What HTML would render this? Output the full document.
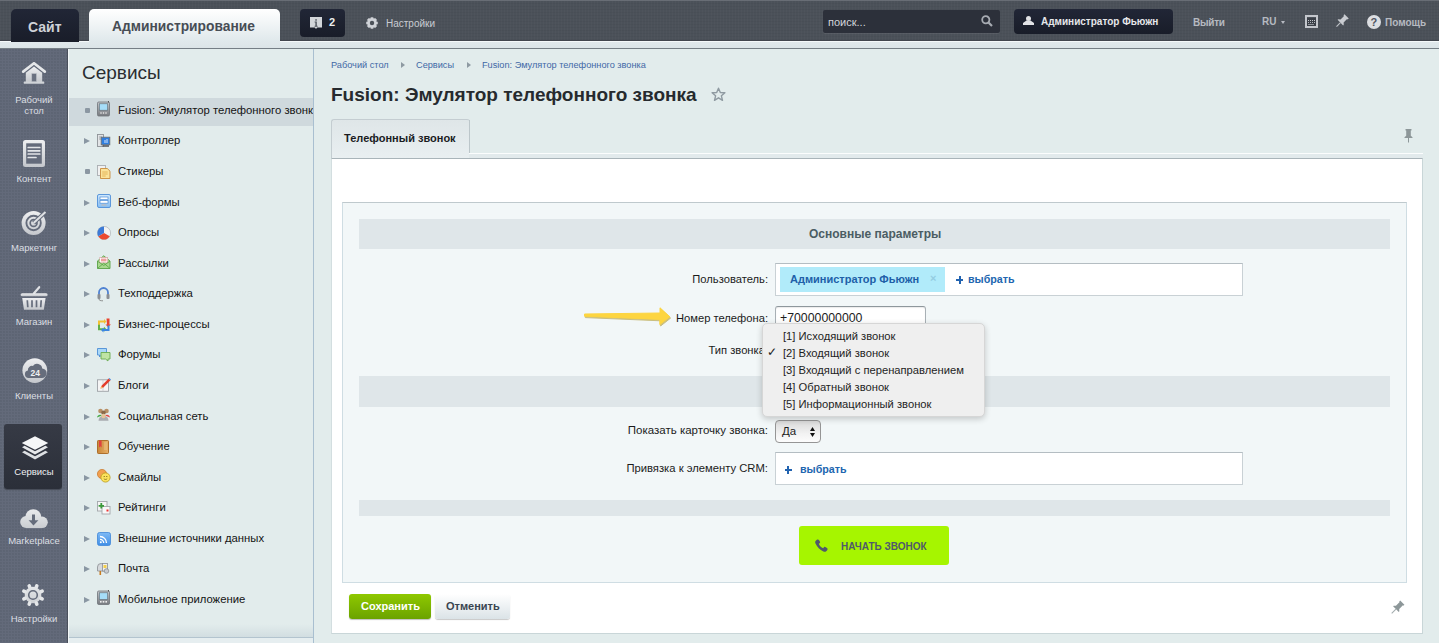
<!DOCTYPE html>
<html><head><meta charset="utf-8">
<style>
*{box-sizing:border-box;margin:0;padding:0}
html,body{width:1439px;height:643px;overflow:hidden}
body{font-family:"Liberation Sans",sans-serif;background:#e2ecec;position:relative;color:#000}
.a{position:absolute}
.nw{white-space:nowrap}
/* top bar */
#top{left:0;top:0;width:1439px;height:41px;background-color:#4b5159;background-image:repeating-linear-gradient(90deg,rgba(255,255,255,.02) 0 1px,transparent 1px 3px),repeating-linear-gradient(0deg,rgba(0,0,0,.035) 0 1px,transparent 1px 3px);border-top:1px solid #686d75;border-bottom:1px solid #42464e}
#strip{left:0;top:41px;width:1439px;height:8px;background:linear-gradient(#f4f8f9 0,#f4f8f9 1px,#e0e8eb 1px,#dbe4e7);border-bottom:1px solid #757e85}
.btn-dark{background:linear-gradient(#212636,#191d29);border-radius:4px}
/* sidebar */
#side{left:0;top:49px;width:68px;height:594px;background-color:#636a7a;background-image:radial-gradient(circle at 1px 1px,rgba(45,50,62,.2) 0.5px,transparent 0.9px);background-size:3px 3px;border-right:1px solid #4a505c}
.sl{color:#dcdfe3;font-size:9.5px;text-align:center;width:68px;left:0;line-height:11px}
/* menu */
#menu{left:68px;top:49px;width:246px;height:594px;background:#e2ecec;border-right:1px solid #a9bfd0;border-left:1px solid #f3f7f8}
.mi{left:-1px;width:246px;height:28px;font-size:11.3px;color:#141414}
.mi .t{position:absolute;left:50px;top:6px;white-space:nowrap}
.mi .ar{position:absolute;left:16px;top:9.8px;width:0;height:0;border-left:6px solid #8a97a3;border-top:3.5px solid transparent;border-bottom:3.5px solid transparent}
.mi .dot{position:absolute;left:17px;top:10px;width:5px;height:5px;background:#8b97a2;border-radius:1px}
.mi svg{position:absolute;left:29px;top:3px}
.mi.hl{background:#cfd9dd}
.mi i{display:block}
.bc{font-size:9.2px;color:#3f68a6}
.bca{width:0;height:0;border-left:4px solid #8e9aa2;border-top:3.5px solid transparent;border-bottom:3.5px solid transparent}
.band{left:359px;width:1031px;background:#dfe6e9}
.lbl{font-size:11.2px;color:#1b1b1b;text-align:right}
.dd{left:783px;font-size:11.2px;color:#1e1e1e}
</style></head><body>

<div id="top" class="a"></div>
<div id="strip" class="a"></div>

<!-- Site button -->
<div class="a btn-dark" style="left:11px;top:9px;width:68px;height:33px;border-radius:5px 5px 0 0"></div>
<div class="a nw" style="left:28px;top:18.5px;font-size:14px;font-weight:700;color:#cfd2d8">Сайт</div>
<!-- Admin tab -->
<div class="a" style="left:89px;top:9px;width:191px;height:33px;background:linear-gradient(#ffffff,#dfe8eb);border-radius:5px 5px 0 0"></div>
<div class="a nw" style="left:112px;top:19px;font-size:13.8px;font-weight:700;color:#474d55">Администрирование</div>
<!-- notifications -->
<div class="a btn-dark" style="left:300px;top:9px;width:45px;height:28px"></div>
<svg class="a" style="left:310px;top:17px" width="13" height="13" viewBox="0 0 13 13"><path d="M0 0h12v10.6H7.2L6 12 4.8 10.6H0z" fill="#d3d6da"/><rect x="5.3" y="2.2" width="1.5" height="1.5" fill="#4d525b"/><path d="M4.6 4.6h2.2v4.2h.8v.9H4.6v-.9h.8V5.5h-.8z" fill="#4d525b"/></svg>
<div class="a nw" style="left:329px;top:16px;font-size:11px;font-weight:700;color:#eceef0">2</div>
<!-- settings -->
<svg class="a" style="left:365.5px;top:17px" width="12" height="12" viewBox="0 0 12 12"><g fill="#d0d3d8"><circle cx="6" cy="6" r="4.6"/><rect x="4.4" y="0.2" width="3.2" height="3" rx="1" transform="rotate(0 6 6)"/><rect x="4.4" y="0.2" width="3.2" height="3" rx="1" transform="rotate(45 6 6)"/><rect x="4.4" y="0.2" width="3.2" height="3" rx="1" transform="rotate(90 6 6)"/><rect x="4.4" y="0.2" width="3.2" height="3" rx="1" transform="rotate(135 6 6)"/><rect x="4.4" y="0.2" width="3.2" height="3" rx="1" transform="rotate(180 6 6)"/><rect x="4.4" y="0.2" width="3.2" height="3" rx="1" transform="rotate(225 6 6)"/><rect x="4.4" y="0.2" width="3.2" height="3" rx="1" transform="rotate(270 6 6)"/><rect x="4.4" y="0.2" width="3.2" height="3" rx="1" transform="rotate(315 6 6)"/></g><circle cx="6" cy="6" r="2.2" fill="#4b5159"/></svg>
<div class="a nw" style="left:386px;top:17.5px;font-size:10px;color:#c9ccd2">Настройки</div>

<!-- search -->
<div class="a" style="left:823px;top:10px;width:177px;height:23px;background:#2c303a;border-radius:2px;box-shadow:0 1px 0 rgba(255,255,255,.08)"></div>
<div class="a nw" style="left:828px;top:16px;font-size:11px;color:#d3d5da">поиск...</div>
<svg class="a" style="left:981px;top:15px" width="12" height="12" viewBox="0 0 12 12"><circle cx="4.8" cy="4.8" r="3.6" fill="none" stroke="#a7abb2" stroke-width="1.8"/><path d="M7.5 7.5L11 11" stroke="#a7abb2" stroke-width="2.2"/></svg>
<!-- user -->
<div class="a btn-dark" style="left:1014px;top:9px;width:159px;height:25px"></div>
<svg class="a" style="left:1023px;top:16px" width="11" height="9" viewBox="0 0 11 9"><circle cx="5.5" cy="2.5" r="2.5" fill="#e2e3e6"/><path d="M3.5 4.5h4l3.5 2.5v2H0V7z" fill="#e2e3e6"/></svg>
<div class="a nw" style="left:1041px;top:16px;font-size:10px;font-weight:700;color:#e6e7ea">Администратор Фьюжн</div>
<div class="a nw" style="left:1193px;top:16.5px;font-size:10px;letter-spacing:-.25px;font-weight:700;color:#b6bac1">Выйти</div>
<div class="a nw" style="left:1262px;top:16px;font-size:10px;font-weight:700;color:#b6bac1">RU</div>
<div class="a" style="left:1281px;top:21px;width:0;height:0;border-top:3px solid #b6bac1;border-left:2.5px solid transparent;border-right:2.5px solid transparent"></div>
<!-- keyboard icon -->
<div class="a" style="left:1305px;top:15px;width:13px;height:13px;border:2px solid #c3c6cc"></div>
<div class="a" style="left:1307px;top:17.5px;width:9px;height:8.5px;background:#3a3f47"></div><div class="a" style="left:1308px;top:19.5px;width:7px;height:1px;border-top:1px dotted #c3c6cc"></div><div class="a" style="left:1308px;top:22px;width:7px;height:1px;border-top:1px dotted #b0b4ba"></div><div class="a" style="left:1308px;top:24px;width:6px;height:1px;background:#8e9399"></div>
<!-- pin -->
<svg class="a" style="left:1334px;top:14px" width="15" height="15" viewBox="0 0 16 16"><g transform="rotate(45 8 8)"><path d="M4.8 0.3h6.4v1.6h-.9v5.2L12.2 8.8v.9H3.8v-.9L5.7 7.1V1.9h-.9z" fill="#c9ccd1"/><rect x="7.4" y="9.6" width="1.2" height="6" fill="#bfc3c8"/></g></svg>
<!-- help -->
<div class="a" style="left:1367px;top:15px;width:14px;height:14px;border-radius:50%;background:#dcdee2"></div>
<div class="a nw" style="left:1370.5px;top:15.5px;font-size:11px;font-weight:700;color:#4e545f">?</div>
<div class="a nw" style="left:1385px;top:17px;font-size:10px;font-weight:700;color:#b6bac1">Помощь</div>

<!-- left sidebar -->
<div id="side" class="a">
<!-- house -->
<svg class="a" style="left:21px;top:13px" width="26" height="23" viewBox="0 0 26 23"><defs><linearGradient id="ig" x1="0" y1="0" x2="0" y2="1"><stop offset="0" stop-color="#eeeff1"/><stop offset="1" stop-color="#c4c7cc"/></linearGradient></defs><path d="M2.2 9.6L13 1.2 23.8 9.6" fill="none" stroke="#e6e8ea" stroke-width="2.6" stroke-linecap="round" stroke-linejoin="round"/><path d="M4.8 10.8L13 4.6l8.2 6.2V20.5H4.8z" fill="url(#ig)"/><rect x="2.8" y="19.6" width="20.4" height="2.2" rx=".6" fill="#d0d3d7"/><rect x="10.8" y="11.6" width="4.6" height="8" fill="#6a7180" stroke="#b9bdc3" stroke-width=".5"/></svg>
<div class="a sl" style="top:45px">Рабочий<br>стол</div>
<!-- doc -->
<svg class="a" style="left:23px;top:91px" width="22" height="27" viewBox="0 0 22 27"><rect x="0" y="0" width="22" height="27" rx="2.5" fill="url(#ig)"/><rect x="3.2" y="3.3" width="15.6" height="20.4" fill="#646b7b"/><path d="M5.2 7.5h11.6M5.2 10.8h11.6M5.2 14h11.6M5.2 17.5h7.8" stroke="#e2e4e7" stroke-width="1.7" stroke-linecap="round"/></svg>
<div class="a sl" style="top:124px">Контент</div>
<!-- target -->
<svg class="a" style="left:21px;top:161px" width="27" height="25" viewBox="0 0 27 25"><circle cx="12.6" cy="13" r="12" fill="url(#ig)"/><circle cx="12.6" cy="13" r="7.2" fill="none" stroke="#646b7b" stroke-width="1.9"/><circle cx="12.6" cy="13" r="3.4" fill="none" stroke="#646b7b" stroke-width="1.7"/><path d="M12.6 13L24.5 2" stroke="#646b7b" stroke-width="4"/><path d="M12.6 13L24.5 2" stroke="#dfe1e4" stroke-width="2"/></svg>
<div class="a sl" style="top:193px">Маркетинг</div>
<!-- basket -->
<svg class="a" style="left:20px;top:236px" width="28" height="26" viewBox="0 0 28 26"><path d="M14 8.2L19.2 2.2" stroke="#dfe1e4" stroke-width="2.2" stroke-linecap="round"/><rect x="0.6" y="8.2" width="27" height="3" rx="1.5" fill="url(#ig)"/><path d="M2.2 13h23.4l-1.8 11.8H4z" fill="url(#ig)"/><path d="M7.3 15.2l.5 7M12 15.2v7M16.5 15.2v7M21.2 15.2l-.5 7" stroke="#666d7c" stroke-width="1.7"/></svg>
<div class="a sl" style="top:267px">Магазин</div>
<!-- clients 24 -->
<svg class="a" style="left:21.5px;top:309px" width="26" height="26" viewBox="0 0 26 26"><circle cx="12.8" cy="12.6" r="12.4" fill="url(#ig)"/><path d="M6.5 20a3.8 3.8 0 0 1-.6-7.5 4.2 4.2 0 0 1 5-4.6 5.2 5.2 0 0 1 9.3 2.6 3.8 3.8 0 0 1-.6 9.5z" fill="#666d7c"/><text x="13.3" y="18" text-anchor="middle" font-family="Liberation Sans" font-weight="700" font-size="8.5" fill="#eef0f2">24</text></svg>
<div class="a sl" style="top:341px">Клиенты</div>
<!-- services active -->
<div class="a" style="left:4px;top:375px;width:58px;height:65px;background:linear-gradient(#363a45,#2b2f39);border-radius:3px;box-shadow:0 1px 1px rgba(0,0,0,.3)"></div>
<svg class="a" style="left:21px;top:386.5px" width="28" height="25" viewBox="0 0 28 25"><path d="M1 16.2L3.6 14.8 14 20.2 24.4 14.8 27 16.2 14 23.6z" fill="#dde0e3"/><path d="M1 11.2L3.6 9.8 14 15.2 24.4 9.8 27 11.2 14 18.6z" fill="#e7e9eb"/><path d="M14 .3L27.2 7 14 13.8.8 7z" fill="#f6f7f8"/></svg>
<div class="a sl" style="top:417px;color:#f0f1f3">Сервисы</div>
<!-- marketplace cloud -->
<svg class="a" style="left:19px;top:459px" width="30" height="22" viewBox="0 0 30 22"><defs><linearGradient id="ig2" gradientUnits="userSpaceOnUse" x1="0" y1="1" x2="0" y2="21"><stop offset="0" stop-color="#e9ebed"/><stop offset="1" stop-color="#c9ccd0"/></linearGradient></defs><g fill="url(#ig2)"><circle cx="7.2" cy="14" r="6"/><circle cx="14.3" cy="9.2" r="8"/><circle cx="23" cy="14.3" r="5.8"/><rect x="7" y="12" width="16" height="8.1"/></g><rect x="13" y="6.5" width="3" height="6.5" fill="#656c7b"/><path d="M9.6 12.2h9.8l-4.9 5.2z" fill="#656c7b"/></svg>
<div class="a sl" style="top:486px">Marketplace</div>
<!-- gear -->
<svg class="a" style="left:21px;top:534px" width="24" height="24" viewBox="0 0 24 24"><defs><linearGradient id="ig3" gradientUnits="userSpaceOnUse" x1="0" y1="0" x2="0" y2="24"><stop offset="0" stop-color="#e8eaec"/><stop offset="1" stop-color="#c9ccd0"/></linearGradient></defs><g fill="url(#ig3)"><circle cx="12" cy="12" r="8.3"/><rect x="10.2" y="0.3" width="3.6" height="5" rx="1.8" transform="rotate(22.5 12 12)"/><rect x="10.2" y="0.3" width="3.6" height="5" rx="1.8" transform="rotate(67.5 12 12)"/><rect x="10.2" y="0.3" width="3.6" height="5" rx="1.8" transform="rotate(112.5 12 12)"/><rect x="10.2" y="0.3" width="3.6" height="5" rx="1.8" transform="rotate(157.5 12 12)"/><rect x="10.2" y="0.3" width="3.6" height="5" rx="1.8" transform="rotate(202.5 12 12)"/><rect x="10.2" y="0.3" width="3.6" height="5" rx="1.8" transform="rotate(247.5 12 12)"/><rect x="10.2" y="0.3" width="3.6" height="5" rx="1.8" transform="rotate(292.5 12 12)"/><rect x="10.2" y="0.3" width="3.6" height="5" rx="1.8" transform="rotate(337.5 12 12)"/></g><circle cx="12" cy="12" r="4.3" fill="none" stroke="#646b7b" stroke-width="1.6"/></svg>
<div class="a sl" style="top:564px">Настройки</div>
</div>
<div id="menu" class="a" style="overflow:hidden">
<div class="a nw" style="left:13px;top:13px;font-size:19px;color:#2a2d31">Сервисы</div>
<div class="a mi hl" style="top:49px"><i class="dot"></i><svg style="top:2.8px" width="15" height="16" viewBox="0 0 15 16"><defs><linearGradient id="gph" x1="0" y1="0" x2="0" y2="1"><stop offset="0" stop-color="#c3c6ca"/><stop offset="1" stop-color="#76797e"/></linearGradient><linearGradient id="gfm" x1="0" y1="0" x2="0" y2="1"><stop offset="0" stop-color="#cfe8fd"/><stop offset="1" stop-color="#86bdf2"/></linearGradient><linearGradient id="grs" x1="0" y1="0" x2="0" y2="1"><stop offset="0" stop-color="#7fbaf5"/><stop offset="1" stop-color="#3f8ee6"/></linearGradient><linearGradient id="gbk" x1="0" y1="0" x2="1" y2="0"><stop offset="0" stop-color="#c9873a"/><stop offset="1" stop-color="#e7b067"/></linearGradient></defs><rect x="0.5" y="1" width="12" height="14" rx="1.2" fill="url(#gph)" stroke="#6f7378" stroke-width=".8"/><rect x="2.3" y="2.8" width="8.4" height="6.4" fill="#a6ddf8" stroke="#5f6a72" stroke-width=".6"/><circle cx="4" cy="12" r=".8" fill="#f2f2f2"/><circle cx="6.5" cy="12" r=".8" fill="#f2f2f2"/><circle cx="9" cy="12" r=".8" fill="#f2f2f2"/><rect x="11" y="0" width="1" height="1.5" fill="#555"/></svg><span class="t">Fusion: Эмулятор телефонного звонка</span></div>
<div class="a mi" style="top:79px"><i class="ar"></i><svg style="top:6.2px" width="15" height="16" viewBox="0 0 15 16"><rect x="0.5" y="0.5" width="6" height="12" fill="#e2e4e6" stroke="#8e9398" stroke-width=".9"/><path d="M2 3h3M2 5h3" stroke="#8e9398" stroke-width=".8"/><rect x="4.2" y="3.2" width="8.6" height="7.6" fill="#2f7fe0" stroke="#6a6f75" stroke-width=".9"/><path d="M8 6v3M10 5v4" stroke="#e6f0ff" stroke-width=".9"/><rect x="5.5" y="11.2" width="6.5" height="1.6" fill="#5a5e63"/></svg><span class="t">Контроллер</span></div>
<div class="a mi" style="top:110px"><i class="dot"></i><svg style="top:5.9px" width="15" height="16" viewBox="0 0 15 16"><rect x="0.5" y="0.5" width="8" height="10" fill="#f1f1f1" stroke="#a9adb1" stroke-width=".9"/><path d="M3.5 3.5h6.8l2.7 2.7v7.3H3.5z" fill="#fbe39a" stroke="#c88c3c" stroke-width=".9"/><path d="M5.2 7h5.5M5.2 9h5.5M5.2 11h3.5" stroke="#e0a94a" stroke-width=".8"/></svg><span class="t">Стикеры</span></div>
<div class="a mi" style="top:141px"><i class="ar"></i><svg style="top:3.9px" width="15" height="16" viewBox="0 0 15 16"><rect x="0.5" y="0.5" width="13" height="13" rx="1.5" fill="url(#gfm)" stroke="#4f8fd8" stroke-width=".9"/><rect x="3" y="3" width="8" height="2.6" fill="#fff" stroke="#4f8fd8" stroke-width=".7"/><rect x="3" y="6.6" width="8" height="2.6" fill="#fff" stroke="#4f8fd8" stroke-width=".7"/><rect x="4.5" y="10.3" width="5" height="1.4" fill="#b9bcc0"/></svg><span class="t">Веб-формы</span></div>
<div class="a mi" style="top:171px"><i class="ar"></i><svg style="top:5.5px" width="15" height="16" viewBox="0 0 15 16"><circle cx="7" cy="7" r="6.6" fill="#f2f2f2" stroke="#a5a9ad" stroke-width=".6"/><path d="M7 7L1.3 10.3A6.6 6.6 0 0 0 12.7 10.3z" fill="#ea4a30"/><path d="M7 7V.4A6.6 6.6 0 0 0 1.3 10.3z" fill="#3d7bd6"/></svg><span class="t">Опросы</span></div>
<div class="a mi" style="top:202px"><i class="ar"></i><svg style="top:3.7px" width="15" height="16" viewBox="0 0 15 16"><path d="M0.5 6L6.75 .8 13 6v7.5H.5z" fill="#a9d98f" stroke="#5aa346" stroke-width=".9"/><rect x="2.8" y="2.6" width="7.9" height="5.2" fill="#fff" stroke="#d9a0a0" stroke-width=".6"/><path d="M4 4.2h5.5M4 5.8h5.5" stroke="#e05050" stroke-width=".8"/><path d="M.6 13.3L6.75 8.2 12.9 13.3M.6 6.2L6.75 10.5 12.9 6.2" fill="none" stroke="#5aa346" stroke-width=".8"/></svg><span class="t">Рассылки</span></div>
<div class="a mi" style="top:232px"><i class="ar"></i><svg style="top:4.9px" width="15" height="16" viewBox="0 0 15 16"><path d="M2 9V6.5a4.5 4.5 0 0 1 9 0V9" fill="none" stroke="#4f82d2" stroke-width="1.8"/><rect x=".5" y="8" width="3" height="5" rx="1" fill="#8a8e93"/><rect x="9.5" y="8" width="3" height="5" rx="1" fill="#8a8e93"/><path d="M2 13c0 1.5 1.5 1.8 4 1.8" fill="none" stroke="#777" stroke-width=".8"/></svg><span class="t">Техподдержка</span></div>
<div class="a mi" style="top:263px"><i class="ar"></i><svg style="top:5.5px" width="15" height="16" viewBox="0 0 15 16"><path d="M1 2.5h6V1l2.5 2.5L7 6V4.5H3v3H1z" fill="#f2c233"/><path d="M9.5 .5h3v6h1.5L11 9 8.5 6.5h1.5z" fill="#e8432e"/><path d="M1 8h2v3.5h4V10l2.5 2.5L7 15v-1.5H1z" fill="#62b048" transform="translate(0,-1.2)"/><path d="M12.5 7.5v5.5h-6v1.4L4 12l2.5-2.5V11h4V7.5z" fill="#3b86e0"/></svg><span class="t">Бизнес-процессы</span></div>
<div class="a mi" style="top:293px"><i class="ar"></i><svg style="top:5.5px" width="15" height="16" viewBox="0 0 15 16"><path d="M.5 .5h9v6.5H4.5l-2 2v-2h-2z" fill="#aad8f8" stroke="#4e8fd6" stroke-width=".9"/><path d="M4 4.5h9v6.5h-2v2l-2.5-2H4z" fill="#bfe4a5" stroke="#6aab4f" stroke-width=".9"/></svg><span class="t">Форумы</span></div>
<div class="a mi" style="top:324px"><i class="ar"></i><svg style="top:4.9px" width="15" height="16" viewBox="0 0 15 16"><rect x=".5" y="1.8" width="11" height="11.5" fill="#f5f5f5" stroke="#9da2a7" stroke-width=".9"/><path d="M6 1.8v11.5" stroke="#c4c7ca" stroke-width=".7"/><path d="M3.5 10.5l.8-2.6 7.4-7.4 1.8 1.8-7.4 7.4z" fill="#e43c2c"/><path d="M11.7.5l1.8 1.8.6-.6-1.8-1.8z" fill="#4a8ce0"/><path d="M3.5 10.5l.8-2.6 1.8 1.8z" fill="#f4c46a"/></svg><span class="t">Блоги</span></div>
<div class="a mi" style="top:355px"><i class="ar"></i><svg style="top:3.7px" width="15" height="16" viewBox="0 0 15 16"><circle cx="3.5" cy="3" r="2.3" fill="#b89066"/><circle cx="9.5" cy="3" r="2.3" fill="#b89066"/><circle cx="6.5" cy="4.8" r="2.3" fill="#8a6a4a"/><path d="M0 9.5a3 3 0 0 1 5 -2z" fill="#45a845"/><path d="M13 9.5a3 3 0 0 0 -5 -2z" fill="#e04848"/><path d="M1.5 12.8a5 5 0 0 1 10 0z" fill="#a9adb1"/><circle cx="6.5" cy="8" r="2.2" fill="#e6c49a"/></svg><span class="t">Социальная сеть</span></div>
<div class="a mi" style="top:385px"><i class="ar"></i><svg style="top:5.5px" width="15" height="16" viewBox="0 0 15 16"><rect x=".5" y=".5" width="11" height="13" rx=".8" fill="url(#gbk)" stroke="#a8651e" stroke-width=".9"/><path d="M2 .5v7l1.3-1.2L4.6 7.5v-7z" fill="#e04040"/><path d="M7 3h3M7 5h3M7 7h3M7 9h3" stroke="#f3d29a" stroke-width=".7"/></svg><span class="t">Обучение</span></div>
<div class="a mi" style="top:416px"><i class="ar"></i><svg style="top:4.3px" width="15" height="16" viewBox="0 0 15 16"><circle cx="5" cy="5" r="4.6" fill="#f2a04f" stroke="#c77626" stroke-width=".7"/><circle cx="8.5" cy="8.5" r="4.6" fill="#fbe25c" stroke="#b99a1b" stroke-width=".8"/><circle cx="7.2" cy="7.5" r=".6" fill="#6b5a10"/><circle cx="9.8" cy="7.5" r=".6" fill="#6b5a10"/><path d="M6.8 9.5a2 2 0 0 0 3.4 0" fill="none" stroke="#6b5a10" stroke-width=".7"/></svg><span class="t">Смайлы</span></div>
<div class="a mi" style="top:446px"><i class="ar"></i><svg style="top:5.7px" width="15" height="16" viewBox="0 0 15 16"><rect x=".5" y=".5" width="9.5" height="9.5" fill="#f4f4f4" stroke="#a3a7ab" stroke-width=".9"/><rect x="5" y="5.5" width="8" height="7.5" fill="#f8f8f8" stroke="#a3a7ab" stroke-width=".9"/><path d="M4.3 2v5.5M1.6 4.8h5.4" stroke="#3a9a3a" stroke-width="1.8"/><rect x="9.5" y="8.5" width="2" height="2" fill="#e33"/></svg><span class="t">Рейтинги</span></div>
<div class="a mi" style="top:477px"><i class="ar"></i><svg style="top:5.5px" width="15" height="16" viewBox="0 0 15 16"><rect x=".5" y=".5" width="13" height="13" rx="2" fill="url(#grs)" stroke="#3f86d8" stroke-width=".8"/><path d="M3 4.5a6.5 6.5 0 0 1 6.5 6.5M3 7.3a3.7 3.7 0 0 1 3.7 3.7" fill="none" stroke="#fff" stroke-width="1.3"/><circle cx="3.8" cy="10.2" r="1" fill="#fff"/></svg><span class="t">Внешние источники данных</span></div>
<div class="a mi" style="top:507px"><i class="ar"></i><svg style="top:5.3px" width="15" height="16" viewBox="0 0 15 16"><path d="M.5 6a3.5 3.5 0 0 1 7 0v4H.5z" fill="#d6d9dc" stroke="#8a8e93" stroke-width=".8"/><rect x="5.5" y="2.5" width="5" height="7.5" fill="#f0f0f0" stroke="#8a8e93" stroke-width=".8"/><rect x="6.5" y="4" width="3" height="3" fill="#f3cf4a"/><circle cx="9.5" cy="10" r="2.3" fill="#c9ccd0" stroke="#80858a" stroke-width=".7"/><rect x="2.5" y="10" width="1.6" height="4" fill="#c87c20"/></svg><span class="t">Почта</span></div>
<div class="a mi" style="top:538px"><i class="ar"></i><svg style="top:3.2px" width="15" height="16" viewBox="0 0 15 16"><rect x=".5" y="1" width="12" height="13.5" rx="1.2" fill="url(#gph)" stroke="#6f7378" stroke-width=".8"/><rect x="2.3" y="2.8" width="8.4" height="6.6" fill="#a6ddf8" stroke="#5f6a72" stroke-width=".6"/><rect x="3" y="11" width="1.6" height="1.6" fill="#f0f0f0"/><rect x="5.7" y="11" width="1.6" height="1.6" fill="#f0f0f0"/><rect x="8.4" y="11" width="1.6" height="1.6" fill="#f0f0f0"/><rect x="11" y="0" width="1" height="1.5" fill="#555"/></svg><span class="t">Мобильное приложение</span></div>
<div class="a" style="left:0;top:575px;width:246px;height:13px;background:linear-gradient(rgba(180,195,205,0),rgba(180,195,205,.35))"></div><div class="a" style="left:0;top:588px;width:246px;height:1px;background:#b3c4cf"></div><div class="a" style="left:0;top:589px;width:246px;height:6px;background:#e6eef0"></div>
</div>


<!-- ============ CONTENT ============ -->
<div class="a nw bc" style="left:331px;top:60px">Рабочий стол</div>
<div class="a bca" style="left:401px;top:62px"></div>
<div class="a nw bc" style="left:416px;top:60px">Сервисы</div>
<div class="a bca" style="left:467px;top:62px"></div>
<div class="a nw bc" style="left:482px;top:60px">Fusion: Эмулятор телефонного звонка</div>
<div class="a nw" style="left:331px;top:84px;font-size:19px;font-weight:700;color:#262a2e">Fusion: Эмулятор телефонного звонка</div>
<svg class="a" style="left:711px;top:86.7px" width="15" height="15" viewBox="0 0 15 15"><path d="M7.5 1.2l1.8 4.3 4.6.3-3.5 3 1.1 4.5-4-2.5-4 2.5 1.1-4.5-3.5-3 4.6-.3z" fill="none" stroke="#8f9aa1" stroke-width="1.4" stroke-linejoin="round"/></svg>

<!-- tab -->
<div class="a" style="left:331px;top:119px;width:139px;height:40px;background:linear-gradient(#dfe6e8,#e9eff1);border:1px solid #c4cdd1;border-bottom:none;border-right:none;border-radius:3px 3px 0 0"></div><div class="a" style="left:469px;top:120px;width:1px;height:33px;background:#bcc6ca"></div>
<div class="a nw" style="left:344px;top:132px;font-size:11px;font-weight:700;color:#1a1c1f">Телефонный звонок</div>
<div class="a" style="left:469px;top:153px;width:954px;height:5px;background:#e2eaec;border-top:1px solid #fbfdfd"></div>
<svg class="a" style="left:1404px;top:128px" width="10" height="15" viewBox="0 0 10 15"><path d="M1.5 1h6v1.4H6.8v5.3L8.5 9.2V10H.5v-.8L2.2 7.7V2.4H1.5z" fill="#8d9799"/><rect x="4" y="10" width="1" height="4.5" fill="#8d9799"/></svg>

<!-- white container -->
<div class="a" style="left:331px;top:158px;width:1092px;height:476px;background:#fff;border-top:1px solid #a9b4b9;border-left:1px solid #d3dee0;border-right:1px solid #c9d6d8;border-bottom:1px solid #c9d6d8"></div>
<!-- inner panel -->
<div class="a" style="left:342px;top:202px;width:1065px;height:381px;background:#f2f7f8;border:1px solid #cfdde3;border-top-color:#bfc9cd"></div>
<div class="a band" style="top:219px;height:30px"></div>
<div class="a nw" style="left:809px;top:227px;font-size:12px;font-weight:700;color:#4b5d63">Основные параметры</div>

<div class="a nw lbl" style="right:671px;top:273px">Пользователь:</div>
<div class="a" style="left:775px;top:263px;width:468px;height:33px;background:#fff;border:1px solid #c9d1d5;border-top-color:#b4bdc2"></div>
<div class="a" style="left:780px;top:267px;width:165px;height:25px;background:#b1ebfa"></div>
<div class="a nw" style="left:790px;top:273px;font-size:11px;font-weight:700;color:#2060a8">Администратор Фьюжн</div>
<div class="a nw" style="left:930px;top:272px;font-size:11px;font-weight:700;color:#94cde2">×</div>
<div class="a" style="left:956px;top:279px;width:7.2px;height:2.2px;background:#2263b0"></div><div class="a" style="left:958.5px;top:276.4px;width:2.2px;height:7.4px;background:#2263b0"></div>
<div class="a nw" style="left:968px;top:273px;font-size:10.7px;font-weight:700;color:#2166b0">выбрать</div>

<!-- yellow arrow -->
<svg class="a" style="left:583px;top:305px" width="92" height="24" viewBox="0 0 92 24"><path d="M1.5 9L77 8V2.8L86.8 11.7 76.8 19.6V14.4L1.5 11.2z" fill="#cbbf7e" stroke="#cbbf7e" stroke-width="1" stroke-linejoin="round" transform="translate(.8,1.4)"/><path d="M1.5 9L77 8V2.8L86.8 11.7 76.8 19.6V14.4L1.5 11.2z" fill="#fdd540" stroke="#fdd540" stroke-width="1" stroke-linejoin="round"/></svg>
<div class="a nw lbl" style="right:671px;top:312px">Номер телефона:</div>
<div class="a" style="left:775px;top:306px;width:151px;height:25px;background:#fff;border:1px solid #a8b0b5;border-top-color:#8e979c;border-radius:3px;box-shadow:inset 0 1px 1px rgba(0,0,0,.08)"></div>
<div class="a nw" style="left:780px;top:311px;font-size:12.3px;color:#1c1c1c">+70000000000</div>

<div class="a nw lbl" style="right:671px;top:344px">Тип звонка:</div>
<div class="a band" style="top:376px;height:31px"></div>

<div class="a nw lbl" style="right:671px;top:424px;font-size:11.5px">Показать карточку звонка:</div>
<div class="a" style="left:775px;top:420px;width:46px;height:23px;background:linear-gradient(#d9d9d9,#f2f2f2 60%,#fcfcfc);border:1px solid #959595;border-radius:4px"></div>
<div class="a nw" style="left:782px;top:425px;font-size:11.5px;color:#1c1c1c">Да</div>
<svg class="a" style="left:810px;top:426.5px" width="5" height="10" viewBox="0 0 5 10"><path d="M2.5 0L5 4.1H0zM2.5 10L0 5.9h5z" fill="#111"/></svg>

<div class="a nw lbl" style="right:671px;top:462px;font-size:11.25px">Привязка к элементу CRM:</div>
<div class="a" style="left:775px;top:452px;width:468px;height:33px;background:#fff;border:1px solid #c9d1d5;border-top-color:#b4bdc2"></div>
<div class="a" style="left:784.5px;top:468.8px;width:7.4px;height:2.2px;background:#2263b0"></div><div class="a" style="left:787.1px;top:466px;width:2.2px;height:7.6px;background:#2263b0"></div>
<div class="a nw" style="left:800px;top:463px;font-size:10.7px;font-weight:700;color:#2166b0">выбрать</div>

<div class="a band" style="top:500px;height:16px"></div>
<div class="a" style="left:799px;top:526px;width:150px;height:39px;background:#a6f500;border-radius:3px"></div>
<svg class="a" style="left:815px;top:539px" width="13" height="13" viewBox="0 0 13 13"><path d="M1.8 0.8C2.6 0.2 3.5 0.3 4 1L5 2.8C5.3 3.4 5.1 4 4.6 4.3L3.8 4.8C4.5 6.8 6.2 8.5 8.2 9.2L8.7 8.4C9 7.9 9.6 7.7 10.2 8L12 9C12.7 9.5 12.8 10.4 12.2 11.2L11.2 12.2C10.5 12.9 9.4 13 8.4 12.5 4.8 10.8 2.2 8.2.5 4.6 0 3.6.1 2.5.8 1.8z" fill="#4f5a6b"/></svg>
<div class="a nw" style="left:841px;top:541px;font-size:10px;font-weight:700;color:#4f5a6a;letter-spacing:0px">НАЧАТЬ ЗВОНОК</div>

<!-- bottom buttons -->
<div class="a" style="left:349px;top:594px;width:82px;height:25px;background:linear-gradient(#8fc800,#6ba300);border-radius:3px;box-shadow:0 1px 1px rgba(0,0,0,.25)"></div>
<div class="a nw" style="left:361px;top:600px;font-size:11px;font-weight:700;color:#fff">Сохранить</div>
<div class="a" style="left:435px;top:594px;width:75px;height:25px;background:linear-gradient(#ffffff,#dbe3e7);border-radius:3px;box-shadow:0 1px 1px rgba(0,0,0,.22)"></div>
<div class="a nw" style="left:446px;top:600px;font-size:11px;font-weight:700;color:#3a4550">Отменить</div>
<svg class="a" style="left:1389px;top:600px" width="16" height="16" viewBox="0 0 16 16"><g transform="rotate(45 8 8)"><path d="M5 0.5h6v1.4h-.7v5.3L12 8.7v.8H4v-.8l1.7-1.5V1.9H5z" fill="#8d9799"/><rect x="7.5" y="9.5" width="1" height="6" fill="#a3acae"/></g></svg>

<!-- dropdown popup -->
<div class="a" style="left:761.5px;top:322.5px;width:223px;height:94px;background:#efefef;border:1px solid #d6d6d6;border-radius:5px;box-shadow:0 2px 6px rgba(0,0,0,.2)"></div>
<div class="a nw dd" style="top:330px">[1] Исходящий звонок</div>
<div class="a nw dd" style="top:347px">[2] Входящий звонок</div>
<div class="a nw dd" style="top:364px">[3] Входящий с перенаправлением</div>
<div class="a nw dd" style="top:381px">[4] Обратный звонок</div>
<div class="a nw dd" style="top:398px">[5] Информационный звонок</div>
<div class="a nw" style="left:767px;top:345px;font-size:12px;color:#222">✓</div>
</body></html>
